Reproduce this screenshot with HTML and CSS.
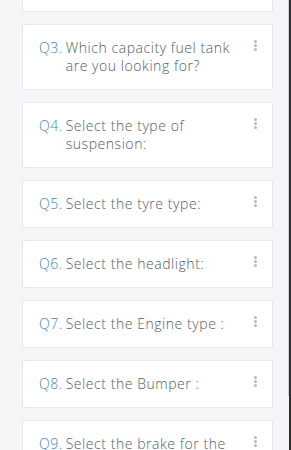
FILE: index.html
```html
<!DOCTYPE html>
<html lang="en">

<head>
    <meta charset="UTF-8">
    <meta name="viewport" content="width=device-width, initial-scale=1.0">
    <title>Questions</title>
    <link rel="stylesheet" href="styles.css">
</head>

<body>
    <div class="frame">
        <div class="question-list">
            <div class="question-card">
                <span class="q-num">Q2.</span>
                <span class="q-text">Select the colour of the panels:</span>
                <span class="kebab"><i></i><i></i><i></i></span>
            </div>
            <div class="question-card">
                <span class="q-num">Q3.</span>
                <span class="q-text">Which capacity fuel tank are you looking for?</span>
                <span class="kebab"><i></i><i></i><i></i></span>
            </div>
            <div class="question-card">
                <span class="q-num">Q4.</span>
                <span class="q-text">Select the type of suspension:</span>
                <span class="kebab"><i></i><i></i><i></i></span>
            </div>
            <div class="question-card">
                <span class="q-num">Q5.</span>
                <span class="q-text">Select the tyre type:</span>
                <span class="kebab"><i></i><i></i><i></i></span>
            </div>
            <div class="question-card">
                <span class="q-num">Q6.</span>
                <span class="q-text">Select the headlight:</span>
                <span class="kebab"><i></i><i></i><i></i></span>
            </div>
            <div class="question-card">
                <span class="q-num">Q7.</span>
                <span class="q-text">Select the Engine type :</span>
                <span class="kebab"><i></i><i></i><i></i></span>
            </div>
            <div class="question-card">
                <span class="q-num">Q8.</span>
                <span class="q-text">Select the Bumper :</span>
                <span class="kebab"><i></i><i></i><i></i></span>
            </div>
            <div class="question-card">
                <span class="q-num">Q9.</span>
                <span class="q-text">Select the brake for the vehicle:</span>
                <span class="kebab"><i></i><i></i><i></i></span>
            </div>
        </div>
    </div>
</body>
</html>
```

FILE: styles.css
```css
html,
body {
    height: 100%;
}

body {
    font-family: "Open Sans", Arial, sans-serif;
    background-color: #f5f6f8;
    margin: 0;
    padding: 0;
    overflow: hidden;
    border-right: 2px solid #2e2e2e;
}

.frame {
    height: 100%;
    border-right: 1px solid #cfd2d6;
    padding: 0 15px 0 22px;
}

.question-list {
    display: flex;
    flex-direction: column;
    gap: 12px;
    margin-top: -54px;
}

.question-card {
    display: flex;
    align-items: flex-start;
    background-color: #fff;
    border: 1px solid #e5e8ec;
    padding: 14px 15px 14px 16px;
    font-size: 14px;
    font-weight: 300;
    line-height: 18px;
    letter-spacing: 0.55px;
}

.q-num {
    flex: none;
    color: #4583c4;
    margin-right: 3px;
}

.q-text {
    flex: 1;
    color: #545c67;
    padding-right: 12px;
}

.kebab {
    flex: none;
    display: flex;
    flex-direction: column;
    gap: 1px;
    padding-top: 1px;
}

.kebab i {
    display: block;
    width: 3px;
    height: 3px;
    border-radius: 50%;
    background-color: #b3bac4;
}
```
